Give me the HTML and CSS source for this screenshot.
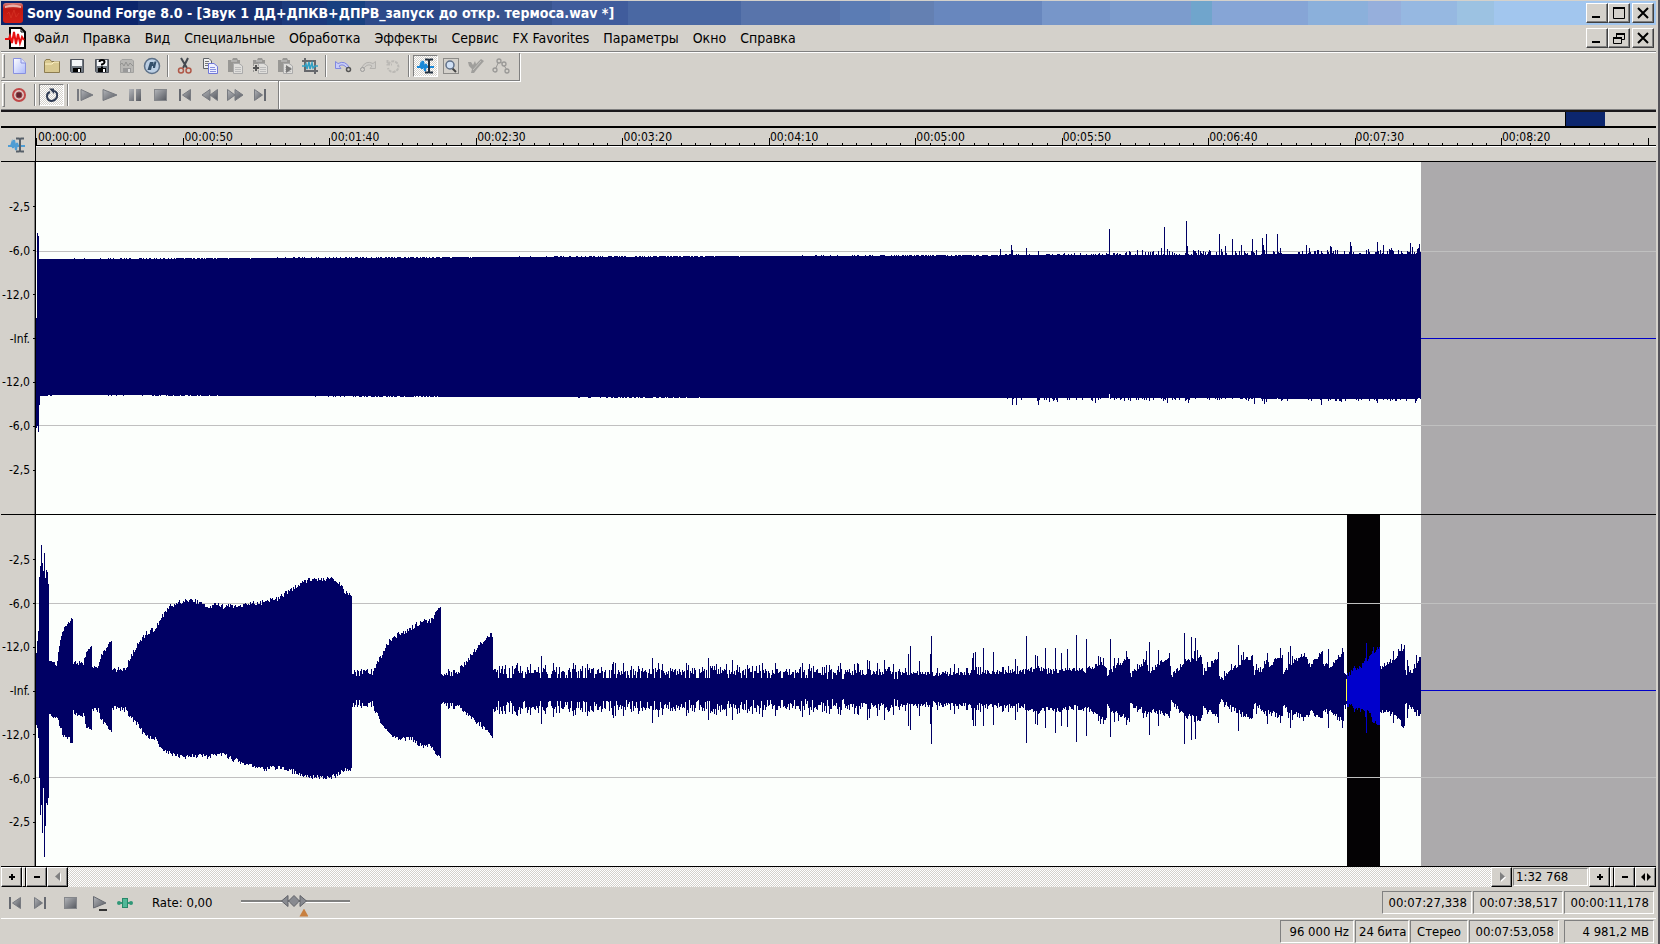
FILE: index.html
```html
<!DOCTYPE html>
<html lang="ru">
<head>
<meta charset="utf-8">
<title>Sony Sound Forge 8.0</title>
<link rel="stylesheet" href="styles.css">
</head>
<body>
<svg class="defs" aria-hidden="true">
  <defs>
    <linearGradient id="steel" x1="0" y1="0" x2="1" y2="1"><stop offset="0" stop-color="#b4b6ba"/><stop offset="1" stop-color="#55585f"/></linearGradient>
    <linearGradient id="paper" x1="0" y1="0" x2="1" y2="1"><stop offset="0" stop-color="#fff"/><stop offset="1" stop-color="#aab8fa"/></linearGradient>
    <linearGradient id="ruby" x1="0" y1="0" x2="0" y2="1"><stop offset="0" stop-color="#d88078"/><stop offset=".3" stop-color="#c01810"/><stop offset="1" stop-color="#d02018"/></linearGradient>
  </defs>
  <symbol id="i-app" viewBox="0 0 20 20"><rect width="20" height="20" rx="3" fill="url(#ruby)"/><path d="M2 3Q10 0 18 3V5Q10 3 2 5Z" fill="#eab0a8"/><path d="M4 11l2-2 2 6 3-8 2 7 3-4" fill="none" stroke="#d83828" stroke-opacity=".6"/></symbol>
  <symbol id="i-doc" viewBox="0 0 22 22"><path d="M5 1H16L20 5V21H5Z" fill="#fff" stroke="#000" stroke-width="2"/><path d="M16 1V5H20" fill="none" stroke="#000"/><path d="M0 12H4L5 9 7 16 9 5 11 17 13 7 15 16 17 10 19 13" fill="none" stroke="#e81010" stroke-width="2"/></symbol>
  <symbol id="i-new" viewBox="0 0 20 20"><path d="M4.500 2.500H12L16.500 7V17.500H4.500Z" fill="url(#paper)" stroke="#8890e0"/><path d="M12 2.500V7H16.500" fill="#dce2ff" stroke="#8890e0"/></symbol>
  <symbol id="i-open" viewBox="0 0 20 20"><path d="M2.500 16.500V5.500L4 3.500H8L9.500 5.500H17.500V16.500Z" fill="#d8c890" stroke="#8c7c50"/><path d="M3 8H10L12 6H17" fill="none" stroke="#fff4c8"/></symbol>
  <symbol id="i-save" viewBox="0 0 20 20"><path d="M3.500 3.500H16.500V16.500H4.500L3.500 15.500Z" fill="#707880" stroke="#50545c"/><rect x="5" y="4" width="10" height="6" fill="#f4f6f8"/><rect x="6" y="12" width="8" height="4" fill="#000"/><rect x="11" y="13" width="2" height="3" fill="#fff"/></symbol>
  <symbol id="i-saveas" viewBox="0 0 20 20"><use href="#i-save"/><path d="M7.500 6Q7.500 4 10 4T12.500 6.200Q12.500 7.500 10 8.500V9.500M10 10.500V12" fill="none" stroke="#000" stroke-width="2"/></symbol>
  <symbol id="i-saveoff" viewBox="0 0 20 20"><path d="M3.500 5L5 3.500H15L16.500 5V16.500H3.500Z" fill="#b8b7b4" stroke="#a2a2a0"/><path d="M3 9l2-2 2 3 2-4 2 4 2-3 3 3" fill="none" stroke="#929290"/><rect x="6" y="12" width="8" height="4" fill="#999"/><rect x="11" y="13" width="2" height="3" fill="#ddd"/></symbol>
  <symbol id="i-publish" viewBox="0 0 20 20"><circle cx="10" cy="10" r="7.500" fill="#bccfe4" stroke="#5c7088" stroke-width="1.500"/><path d="M5.500 14L8 6H11.500V10H10L9 14ZM11 12V10.500L12.500 5.500H14.500L13 12Z" fill="#34506c"/></symbol>
  <symbol id="i-cut" viewBox="0 0 20 20"><path d="M6 2L12 12M13 2L8 12" stroke="#444950" stroke-width="2"/><circle cx="6" cy="14.500" r="2.500" fill="none" stroke="#b05848" stroke-width="1.500"/><circle cx="13.500" cy="14.500" r="2.500" fill="none" stroke="#b05848" stroke-width="1.500"/></symbol>
  <symbol id="i-copy" viewBox="0 0 20 20"><path d="M3.500 2.500H9L11.500 5V12.500H3.500Z" fill="#f0f0f0" stroke="#606468"/><path d="M5 5.500H9M5 7.500H9M5 9.500H9" stroke="#777"/><path d="M8.500 7.500H14L17.500 10.500V17.500H8.500Z" fill="#eef0ff" stroke="#7078d8"/><path d="M10 11.500H15M10 13.500H16M10 15.500H16" stroke="#8890e0"/></symbol>
  <symbol id="i-paste" viewBox="0 0 20 20"><path d="M3 4H7L8 2H12L13 4H15V16H3Z" fill="#989794"/><path d="M6 5H12" stroke="#ccc"/><path d="M8.500 7.500H14L17.500 10V17.500H8.500Z" fill="#dfdedb" stroke="#aaa"/><path d="M10 11.500H16M10 13.500H16M10 15.500H16" stroke="#bbb"/></symbol>
  <symbol id="i-pastemix" viewBox="0 0 20 20"><use href="#i-paste"/><path d="M2 12H10M6 8V16" stroke="#d4d1cb" stroke-width="4"/><path d="M3 12H9M6 9V15" stroke="#555" stroke-width="2"/></symbol>
  <symbol id="i-pasteplay" viewBox="0 0 20 20"><use href="#i-paste"/><path d="M11 9L17 13 11 17Z" fill="#777"/></symbol>
  <symbol id="i-crop" viewBox="0 0 20 20"><path d="M5 2V15H18M2 5H15V18" fill="none" stroke="#66686c" stroke-width="2"/><path d="M2 10H5L6 8 7 13 9 6 10 13 12 7 13 12 15 10H18" fill="none" stroke="#30a0c4" stroke-width="1.500"/></symbol>
  <symbol id="i-undo" viewBox="0 0 20 20"><path d="M2.500 5.500V12.500H8L6 10Q10 7 14 12L16 11Q12 4 5 7.500Z" fill="#c8ccf8" stroke="#8088e0"/><circle cx="15.500" cy="13.500" r="2" fill="#d4d1cb" stroke="#555" stroke-width="1.500"/></symbol>
  <symbol id="i-redo" viewBox="0 0 20 20"><path d="M17.500 5.500V12.500H12L14 10Q10 7 6 12L4 11Q8 4 15 7.500Z" fill="#ceccc8" stroke="#b4b2ae"/><circle cx="4.500" cy="13.500" r="2" fill="#d4d1cb" stroke="#999"/></symbol>
  <symbol id="i-repeat" viewBox="0 0 20 20"><path d="M4.500 4V8.500H9M5 8Q10 3 14 7Q18 13 11 16Q6 16 5 12" fill="none" stroke="#bbb9b5" stroke-width="2" stroke-dasharray="3 1"/></symbol>
  <symbol id="i-edit" viewBox="0 0 20 20"><path d="M1 11H4L5 8 6 13 7 5 9 15 10 8 11 11H18" fill="none" stroke="#1888d8" stroke-width="2"/><path d="M9 3.500H12L13 4.500 14 3.500H17M13 4V16M9 16.500H12L13 15.500 14 16.500H17" fill="none" stroke="#223040" stroke-width="2"/></symbol>
  <symbol id="i-magnify" viewBox="0 0 20 20"><rect x="2.500" y="2.500" width="15" height="15" fill="none" stroke="#444" stroke-dasharray="1 1"/><path d="M11 12L15 16" stroke="#444" stroke-width="2"/><circle cx="9" cy="9" r="4" fill="#d0e0f4" stroke="#607088" stroke-width="1.500"/></symbol>
  <symbol id="i-pencil" viewBox="0 0 20 20"><path d="M2 6H5L7 9 9 5 10 8 15 3 18 5 11 13 8 17H5L6 13 3 10Z" fill="#a09f9c"/><path d="M7 14L15 5" stroke="#c4c2be"/></symbol>
  <symbol id="i-envelope" viewBox="0 0 20 20"><path d="M4 14L8 5 12 8 16 14" fill="none" stroke="#999896"/><g fill="#d4d1cb" stroke="#999896" stroke-width="1.300"><circle cx="4" cy="14" r="2"/><circle cx="8" cy="5" r="2"/><circle cx="13" cy="8" r="2"/><circle cx="16" cy="15" r="2"/></g></symbol>
  <symbol id="i-record" viewBox="0 0 20 20"><circle cx="10" cy="10" r="6" fill="#dcc4c0" stroke="#c04848" stroke-width="2"/><circle cx="10" cy="10" r="3" fill="#602830" stroke="#984048"/></symbol>
  <symbol id="i-loop" viewBox="0 0 20 20"><path d="M12 6Q16 7 15 12Q13 16 9 16Q5 15 5 11Q5 8 8 7" fill="none" stroke="#303c54" stroke-width="2"/><path d="M7 3.500H12V9Z" fill="#303c54"/></symbol>
  <symbol id="i-playall" viewBox="0 0 20 20"><path d="M3 4V16" stroke="#777a80" stroke-width="2"/><path d="M6 4.500L18 10 6 15.500Z" fill="url(#steel)" stroke="#777a80"/></symbol>
  <symbol id="i-play" viewBox="0 0 20 20"><path d="M3 4.500L17 10 3 15.500Z" fill="url(#steel)" stroke="#777a80"/></symbol>
  <symbol id="i-pause" viewBox="0 0 20 20"><path d="M4 4H9V16H4ZM11 4H16V16H11Z" fill="url(#steel)"/></symbol>
  <symbol id="i-stop" viewBox="0 0 20 20"><rect x="4.500" y="4.500" width="12" height="11" fill="url(#steel)" stroke="#85878b"/></symbol>
  <symbol id="i-start" viewBox="0 0 20 20"><path d="M5 4V16" stroke="#666970" stroke-width="2"/><path d="M15.500 4.500V15.500L7.500 10Z" fill="url(#steel)" stroke="#777a80"/></symbol>
  <symbol id="i-end" viewBox="0 0 20 20"><path d="M15 4V16" stroke="#666970" stroke-width="2"/><path d="M4.500 4.500V15.500L12.500 10Z" fill="url(#steel)" stroke="#777a80"/></symbol>
  <symbol id="i-rew" viewBox="0 0 20 20"><path d="M10 4.500V15.500L2 10ZM17.500 4.500V15.500L10 10Z" fill="url(#steel)" stroke="#777a80"/></symbol>
  <symbol id="i-fwd" viewBox="0 0 20 20"><path d="M10 4.500V15.500L18 10ZM2.500 4.500V15.500L10 10Z" fill="url(#steel)" stroke="#777a80"/></symbol>
  <symbol id="i-playplug" viewBox="0 0 20 20"><path d="M3.500 3.500L16 10 3.500 15Z" fill="url(#steel)" stroke="#666970"/><path d="M9 17H17" stroke="#333" stroke-width="2"/></symbol>
  <symbol id="i-scrub" viewBox="0 0 20 20"><path d="M4 10H16" stroke="#309878" stroke-width="2"/><rect x="7.500" y="5.500" width="5" height="9" fill="#50b898" stroke="#288868"/><circle cx="4" cy="10" r="2" fill="#309878"/><circle cx="16" cy="10" r="2" fill="#309878"/></symbol>
  <symbol id="i-min" viewBox="0 0 16 16"><path d="M3 12H11" stroke="#000" stroke-width="2"/></symbol>
  <symbol id="i-max" viewBox="0 0 16 16"><path d="M2.500 3V13.500H13.500V3" fill="none" stroke="#000"/><path d="M2 3H14" stroke="#000" stroke-width="2"/></symbol>
  <symbol id="i-restore" viewBox="0 0 16 16"><path d="M5.500 7V4.500H13.500V9.500H11" fill="none" stroke="#000"/><path d="M5 4H14M2 8H11" stroke="#000" stroke-width="2"/><path d="M2.500 8V13.500H10.500V8" fill="none" stroke="#000"/></symbol>
  <symbol id="i-close" viewBox="0 0 16 16"><path d="M3 3L13 13M13 3L3 13" stroke="#000" stroke-width="2"/></symbol>
  <symbol id="i-plus" viewBox="0 0 16 16"><path d="M5 8H11M8 5V11" stroke="#000" stroke-width="2"/></symbol>
  <symbol id="i-minus" viewBox="0 0 16 16"><path d="M5 8H11" stroke="#000" stroke-width="2"/></symbol>
  <symbol id="i-left" viewBox="0 0 16 16"><path d="M11 4V13L6 8.500Z" fill="#fff"/><path d="M10 3V12L5 7.500Z" fill="#808080"/></symbol>
  <symbol id="i-right" viewBox="0 0 16 16"><path d="M7 4V13L12 8.500Z" fill="#fff"/><path d="M6 3V12L11 7.500Z" fill="#808080"/></symbol>
  <symbol id="i-both" viewBox="0 0 16 16"><path d="M7 4V12L3 8ZM9 4V12L13 8Z" fill="#000"/></symbol>
</svg>

<div class="window">
  <header class="titlebar">
    <svg class="app-icon"><use href="#i-app"/></svg>
    <h1 class="title">Sony Sound Forge 8.0 - [Звук 1 ДД+ДПКВ+ДПРВ_запуск до откр. термоса.wav *]</h1>
    <div class="caption-buttons">
      <button class="cap" aria-label="Свернуть"><svg><use href="#i-min"/></svg></button>
      <button class="cap" aria-label="Развернуть"><svg><use href="#i-max"/></svg></button>
      <button class="cap cap-close" aria-label="Закрыть"><svg><use href="#i-close"/></svg></button>
    </div>
  </header>

  <nav class="menubar">
    <svg class="doc-icon"><use href="#i-doc"/></svg>
    <button>Файл</button><button>Правка</button><button>Вид</button><button>Специальные</button><button>Обработка</button><button>Эффекты</button><button>Сервис</button><button>FX Favorites</button><button>Параметры</button><button>Окно</button><button>Справка</button>
    <div class="caption-buttons">
      <button class="cap" aria-label="Свернуть документ"><svg><use href="#i-min"/></svg></button>
      <button class="cap" aria-label="Восстановить документ"><svg><use href="#i-restore"/></svg></button>
      <button class="cap cap-close" aria-label="Закрыть документ"><svg><use href="#i-close"/></svg></button>
    </div>
  </nav>

  <div class="toolbars">
    <div class="toolbar" role="toolbar" aria-label="Стандартная">
      <span class="grip"></span>
      <button class="tool" aria-label="Новый"><svg><use href="#i-new"/></svg></button>
      <span class="sep"></span>
      <button class="tool" aria-label="Открыть"><svg><use href="#i-open"/></svg></button>
      <button class="tool" aria-label="Сохранить"><svg><use href="#i-save"/></svg></button>
      <button class="tool" aria-label="Сохранить как"><svg><use href="#i-saveas"/></svg></button>
      <button class="tool" aria-label="Сохранить всё"><svg><use href="#i-saveoff"/></svg></button>
      <button class="tool" aria-label="Публикация"><svg><use href="#i-publish"/></svg></button>
      <span class="sep"></span>
      <button class="tool" aria-label="Вырезать"><svg><use href="#i-cut"/></svg></button>
      <button class="tool" aria-label="Копировать"><svg><use href="#i-copy"/></svg></button>
      <button class="tool" aria-label="Вставить"><svg><use href="#i-paste"/></svg></button>
      <button class="tool" aria-label="Смешать"><svg><use href="#i-pastemix"/></svg></button>
      <button class="tool" aria-label="Прослушать буфер"><svg><use href="#i-pasteplay"/></svg></button>
      <button class="tool" aria-label="Обрезать"><svg><use href="#i-crop"/></svg></button>
      <span class="sep"></span>
      <button class="tool" aria-label="Отменить"><svg><use href="#i-undo"/></svg></button>
      <button class="tool" aria-label="Вернуть"><svg><use href="#i-redo"/></svg></button>
      <button class="tool" aria-label="Повторить"><svg><use href="#i-repeat"/></svg></button>
      <span class="sep"></span>
      <button class="tool pressed" aria-label="Правка" aria-pressed="true"><svg><use href="#i-edit"/></svg></button>
      <button class="tool" aria-label="Масштаб"><svg><use href="#i-magnify"/></svg></button>
      <button class="tool" aria-label="Карандаш"><svg><use href="#i-pencil"/></svg></button>
      <button class="tool" aria-label="Огибающая"><svg><use href="#i-envelope"/></svg></button>
    </div>
    <div class="toolbar" role="toolbar" aria-label="Транспорт">
      <span class="grip"></span>
      <button class="tool" aria-label="Запись"><svg><use href="#i-record"/></svg></button>
      <span class="sep"></span>
      <button class="tool pressed" aria-label="Цикл" aria-pressed="true"><svg><use href="#i-loop"/></svg></button>
      <span class="sep"></span>
      <button class="tool" aria-label="Играть всё"><svg><use href="#i-playall"/></svg></button>
      <button class="tool" aria-label="Играть"><svg><use href="#i-play"/></svg></button>
      <button class="tool" aria-label="Пауза"><svg><use href="#i-pause"/></svg></button>
      <button class="tool" aria-label="Стоп"><svg><use href="#i-stop"/></svg></button>
      <button class="tool" aria-label="В начало"><svg><use href="#i-start"/></svg></button>
      <button class="tool" aria-label="Назад"><svg><use href="#i-rew"/></svg></button>
      <button class="tool" aria-label="Вперёд"><svg><use href="#i-fwd"/></svg></button>
      <button class="tool" aria-label="В конец"><svg><use href="#i-end"/></svg></button>
    </div>
  </div>

  <div class="overview"><span class="overview-lead"></span><span class="overview-selection"></span></div>

  <main class="editor">
    <div class="corner"><svg><use href="#i-edit"/></svg></div>
    <div class="ruler">
      <div class="ruler-scale">
        <div class="ruler-labels"><span>00:00:00</span><span>00:00:50</span><span>00:01:40</span><span>00:02:30</span><span>00:03:20</span><span>00:04:10</span><span>00:05:00</span><span>00:05:50</span><span>00:06:40</span><span>00:07:30</span><span>00:08:20</span></div>
        <svg class="ruler-ticks" viewBox="0 0 1620 7" preserveAspectRatio="none"><path id="ticks"/></svg>
      </div>
    </div>
    <div class="level"><span>-2,5</span><span>-6,0</span><span>-12,0</span><span>-Inf.</span><span>-12,0</span><span>-6,0</span><span>-2,5</span></div>
    <div class="channel">
      <svg class="wave" viewBox="36 -176 1620 352" preserveAspectRatio="none">
        <rect class="beyond" x="1421" y="-176" width="235" height="352"/>
        <path class="guide" d="M36-87H1656V-86H36ZM36 87H1656V88H36Z"/>
        <rect class="silence" x="1421" y="0" width="235" height="1"/>
        <path class="signal" id="left"/>
      </svg>
    </div>
    <div class="level"><span>-2,5</span><span>-6,0</span><span>-12,0</span><span>-Inf.</span><span>-12,0</span><span>-6,0</span><span>-2,5</span></div>
    <div class="channel">
      <svg class="wave" viewBox="36 -175 1620 351" preserveAspectRatio="none">
        <rect class="beyond" x="1421" y="-175" width="235" height="351"/>
        <rect class="selection" x="1347" y="-175" width="33" height="351"/>
        <path class="guide" d="M36-87H1656V-86H36ZM36 87H1656V88H36Z"/>
        <rect class="silence" x="1421" y="0" width="235" height="1"/>
        <path class="signal" id="right"/>
        <path class="signal-selected" id="selected"/>
        <rect class="cursor" x="1346" y="-11" width="1" height="22"/>
      </svg>
    </div>
  </main>

  <div class="scrollrow">
    <button class="flat" aria-label="Увеличить уровень"><svg><use href="#i-plus"/></svg></button>
    <span class="splitter"></span>
    <button class="flat" aria-label="Уменьшить уровень"><svg><use href="#i-minus"/></svg></button>
    <button class="flat" aria-label="Влево"><svg><use href="#i-left"/></svg></button>
    <div class="track"></div>
    <button class="flat" aria-label="Вправо"><svg><use href="#i-right"/></svg></button>
    <output class="ratio">1:32 768</output>
    <button class="flat" aria-label="Приблизить"><svg><use href="#i-plus"/></svg></button>
    <span class="splitter"></span>
    <button class="flat" aria-label="Отдалить"><svg><use href="#i-minus"/></svg></button>
    <button class="flat" aria-label="Показать всё"><svg><use href="#i-both"/></svg></button>
  </div>

  <div class="transport">
    <button class="tool" aria-label="В начало"><svg><use href="#i-start"/></svg></button>
    <button class="tool" aria-label="В конец"><svg><use href="#i-end"/></svg></button>
    <button class="tool spaced" aria-label="Стоп"><svg><use href="#i-stop"/></svg></button>
    <button class="tool spaced" aria-label="Играть через эффект"><svg><use href="#i-playplug"/></svg></button>
    <button class="tool" aria-label="Прокрутка"><svg><use href="#i-scrub"/></svg></button>
    <label class="rate-label" for="rate">Rate: 0,00</label>
    <div class="rate"><input id="rate" type="range" min="0" max="100" value="48"><span class="rate-mark"></span></div>
    <div class="cells">
      <span class="cell time">00:07:27,338</span><span class="cell time">00:07:38,517</span><span class="cell time">00:00:11,178</span>
    </div>
  </div>

  <footer class="status">
    <span class="cell freq">96 000 Hz</span><span class="cell bits">24 бита</span><span class="cell mode">Стерео</span><span class="cell time">00:07:53,058</span><span class="cell time disk">4 981,2 MB</span>
  </footer>
</div>
<script src="wave.js"></script>
</body>
</html>
```
FILE: styles.css
```css
* { box-sizing: border-box; }
body {
  margin: 0;
  background: #d4d1cb;
  color: #000;
  font: 13px/16px "DejaVu Sans Condensed", "DejaVu Sans", "Noto Sans", sans-serif;
}
button { margin: 0; padding: 0; border: 0; background: none; font: inherit; color: inherit; }
svg { display: block; }
.defs { position: absolute; width: 0; height: 0; }

.window {
  display: flex;
  flex-direction: column;
  height: 100vh;
  padding: 1px 2px 0 1px;
  border-right: 2px solid #55535a;
}

/* title and menu */
.titlebar {
  display: flex;
  align-items: center;
  flex: 0 0 24px;
  padding: 0 2px 0 2px;
  background: linear-gradient(90deg,
    #0c256b 8.300%, #183171 8.300% 17%, #1c3a7c 17% 19.700%, #184180 19.700% 22%,
    #2c4a8a 22% 26.500%, #38548f 26.500% 33.300%, #405c9c 33.300% 37.900%, #4a68a3 37.900% 44.700%,
    #5874ab 44.700% 50.700%, #5b7cb4 50.700% 53.700%, #6480b2 53.700% 56.400%, #6887be 56.400% 62.900%,
    #7796c9 62.900% 67%, #7c9ccd 67% 71.900%, #70a5cc 71.900% 73.200%, #86a5d6 73.200% 79%,
    #8bb0db 79% 82.600%, #96afdc 82.600% 84.600%, #96b8e1 84.600% 88%, #9cc2e2 88% 90.200%, #a2c6ee 90.200%);
}
.app-icon { width: 20px; height: 20px; }
.title { flex: 1; margin: 0 0 0 4px; color: #fff; font-size: 14px; line-height: 20px; white-space: nowrap; }
.caption-buttons { display: flex; margin-left: auto; }
.cap {
  display: grid;
  place-items: center;
  width: 22px;
  height: 20px;
  background: #d4d1cb;
  border: 1px solid;
  border-color: #fff #404040 #404040 #fff;
  box-shadow: inset -1px -1px #808080;
}
.cap svg { width: 16px; height: 16px; }
.cap-close { margin-left: 2px; }
.menubar {
  display: flex;
  align-items: center;
  flex: 0 0 27px;
  padding: 0 2px 1px 4px;
  border-bottom: 1px solid #808080;
  gap: 14px;
}
.menubar > button { font-size: 14px; white-space: nowrap; }
.doc-icon { width: 22px; height: 22px; margin-right: -7px; }

/* toolbars */
.toolbars { border-top: 1px solid #fff; border-bottom: 1px solid #808080; }
.toolbar {
  display: flex;
  align-items: center;
  width: max-content;
  height: 28px;
  padding: 0 6px 1px 0;
  border-right: 1px solid #808080;
  border-bottom: 1px solid #808080;
  box-shadow: 1px 1px #fff;
}
.toolbar + .toolbar { padding-bottom: 0; border-bottom: 0; box-shadow: 1px 0 #fff; }
.grip { width: 3px; height: 24px; margin: 0 1px; border: 1px solid; border-color: #fff #808080 #808080 #fff; }
.sep { width: 2px; height: 22px; margin: 0 3px; border-left: 1px solid #808080; border-right: 1px solid #fff; }
.tool { display: grid; place-items: center; width: 25px; height: 22px; }
.tool svg { width: 20px; height: 20px; }
.pressed {
  border: 1px solid;
  border-color: #808080 #fff #fff #808080;
  background: repeating-conic-gradient(#fff 0 25%, #d4d1cb 0 50%) 0 0 / 2px 2px;
}

/* overview strip */
.overview {
  display: flex;
  flex: 0 0 18px;
  border-top: 2px solid #1a181c;
  border-bottom: 2px solid #000;
}
.overview-lead { flex: 1565; }
.overview-selection { flex: 39; background: #0c266e; border-left: 1px solid #000; }
.overview::after { content: ""; flex: 51; }

/* editor */
.editor {
  display: grid;
  grid-template-columns: 35px 1fr;
  grid-template-rows: 34px minmax(0, 353fr) minmax(0, 352fr);
  flex: 1;
  min-height: 0;
}
.corner { display: grid; place-items: center; padding-right: 2px; border-right: 1px solid #000; border-bottom: 1px solid #000; }
.corner svg { width: 20px; height: 20px; opacity: .7; }
.ruler { border-bottom: 1px solid #000; }
.ruler-scale { display: grid; height: 18px; border-bottom: 1px solid #000; box-shadow: 0 1px #fff; }
.ruler-labels, .ruler-ticks { grid-area: 1 / 1; min-width: 0; }
.ruler-labels { display: flex; overflow: hidden; font-size: 12px; line-height: 18px; }
.ruler-labels span { flex: 0 0 9.037%; padding-left: 2px; }
.ruler-ticks { align-self: end; width: 100%; height: 7px; shape-rendering: crispEdges; }
.level {
  display: flex;
  flex-direction: column;
  padding-top: 1px;
  border-right: 1px solid #000;
  border-bottom: 1px solid #000;
  box-shadow: inset -1px 0 #808080;
  font-size: 12px;
}
.level::before, .level::after { content: ""; flex: .5; }
.level span { display: flex; align-items: center; justify-content: flex-end; flex: 1; gap: 3px; }
.level span::after { content: ""; width: 2px; height: 1px; background: #000; }
.channel { min-height: 0; overflow: hidden; background: #fcfffc; border-bottom: 1px solid #000; }
.wave { width: 100%; height: 100%; shape-rendering: crispEdges; }
.beyond { fill: #acaaac; }
.guide { fill: #c0c0c0; }
.silence { fill: #0000c8; }
.signal { fill: #000064; }
.signal-selected { fill: #0000cc; }
.selection { fill: #040204; }
.cursor { fill: #ffff40; }

/* scroll row */
.scrollrow { display: flex; flex: 0 0 20px; }
.flat {
  display: grid;
  place-items: center;
  width: 21px;
  border: 1px solid;
  border-color: #fff #000 #000 #fff;
  box-shadow: inset -1px -1px #808080;
}
.flat svg { width: 16px; height: 16px; }
.splitter { width: 4px; border: 1px solid; border-color: #fff #000 #000 #fff; }
.track { flex: 1; background: repeating-conic-gradient(#fff 0 25%, #d4d1cb 0 50%) 0 0 / 2px 2px; }
.ratio { width: 75px; margin: 1px; padding-left: 2px; border: 1px solid; border-color: #808080 #fff #fff #808080; line-height: 16px; }

/* transport */
.transport { display: flex; align-items: center; flex: 0 0 32px; padding: 0 2px 0 1px; border-bottom: 1px solid #fff; }
.spaced { margin-left: 5px; }
.rate-label { margin-left: 15px; }
.rate { position: relative; width: 109px; height: 28px; margin-left: 29px; }
.rate input { appearance: none; display: block; width: 100%; height: 26px; margin: 0; background: none; }
.rate input::-webkit-slider-runnable-track { height: 3px; background: linear-gradient(#808080 2px, #fff 2px); }
.rate input::-webkit-slider-thumb {
  appearance: none;
  width: 26px;
  height: 12px;
  margin-top: -5px;
  background: url("data:image/svg+xml,%3Csvg xmlns='http://www.w3.org/2000/svg' viewBox='0 0 26 12'%3E%3Cpath d='M7 .5V11.500L.5 6ZM19 .5V11.500L25.500 6ZM13 .5L18.500 6 13 11.500 7.500 6Z' fill='%23888a90' stroke='%23606268'/%3E%3C/svg%3E");
}
.rate-mark {
  position: absolute;
  left: 58px;
  bottom: 0;
  width: 9px;
  height: 8px;
  background: #c88040;
  clip-path: polygon(50% 0, 100% 100%, 0 100%);
}

/* sunken cells */
.cells { display: flex; gap: 1px; margin-left: auto; }
.cell {
  height: 23px;
  padding: 0 4px;
  border: 1px solid;
  border-color: #808080 #fff #fff #808080;
  line-height: 21px;
  text-align: right;
  white-space: nowrap;
}
.time { width: 90px; }
.status { display: flex; justify-content: flex-end; flex: 0 0 25px; gap: 1px; padding: 1px 2px 0; }
.freq { width: 74px; }
.bits { width: 54px; padding: 0 3px; }
.mode { width: 58px; text-align: center; }
.disk { margin-left: 4px; }
```
FILE: wave.js
```javascript
const START = 36, END = 1421, SEL_START = 1347, SEL_END = 1380;

// Breakpoints: x, peak above centre, peak below centre
const rightEnvelope = [
  [36,37,35],[37,49,38],[38,59,48],[39,113,88],[40,124,125],[41,145,115],[42,127,143],[43,119,98],
  [44,137,167],[45,112,136],[46,120,113],[47,118,115],[48,106,108],[49,28,24],[56,25,26],[57,30,27],
  [59,45,34],[62,55,43],[65,63,48],[69,67,49],[72,71,55],[73,27,21],[80,27,27],[83,27,24],[86,38,35],
  [91,45,37],[92,20,18],[98,24,20],[101,35,29],[106,43,36],[111,48,40],[112,20,17],[125,20,19],
  [130,32,26],[138,46,35],[146,56,47],[155,61,47],[160,71,58],[170,84,62],[180,88,67],[190,89,65],
  [203,87,65],[206,80,67],[213,85,64],[224,83,65],[240,84,72],[260,87,78],[280,92,77],[290,100,80],
  [300,105,84],[308,110,86],[318,110,87],[330,111,86],[335,110,85],[345,98,80],[351,95,80],[352,17,14],
  [372,18,14],[380,32,30],[390,50,44],[400,56,48],[410,60,48],[420,68,54],[430,68,56],[438,82,64],
  [440,84,66],[441,17,15],[455,17,16],[465,26,22],[473,37,30],[480,46,34],[490,56,43],[492,55,46],
  [493,17,17],[700,17,16],[950,16,14],[1024,18,16],[1026,20,20],[1060,19,20],[1070,20,17],[1086,20,18],
  [1100,27,29],[1106,24,28],[1107,12,12],[1109,18,20],[1129,33,30],[1130,14,14],[1146,29,22],[1149,18,20],
  [1169,34,25],[1171,14,13],[1183,28,25],[1201,33,29],[1203,18,18],[1218,34,28],[1219,12,12],[1225,12,12],
  [1228,20,16],[1252,34,28],[1254,17,15],[1282,34,28],[1283,19,17],[1303,36,28],[1310,24,22],[1322,38,30],
  [1323,25,20],[1330,24,22],[1343,39,32],[1344,19,16],[1346,18,16],[1347,14,14],[1355,22,20],[1367,28,20],
  [1372,37,30],[1379,41,36],[1380,22,20],[1396,34,26],[1399,41,30],[1404,42,37],[1405,17,14],[1410,17,17],
  [1419,31,24],[1421,31,24]
];
const rightSpikes = {
  541:[34,34],652:[32,33],708:[32,30],732:[30,30],762:[27,27],867:[30,30],869:[29,28],884:[30,30],
  908:[36,36],910:[44,40],919:[29,26],930:[36,34],931:[54,54],954:[26,24],972:[32,30],973:[37,36],
  975:[38,36],983:[42,36],993:[38,35],1015:[31,30],1026:[54,53],1035:[35,34],1037:[34,35],1045:[42,38],
  1055:[42,43],1061:[37,36],1067:[41,37],1076:[55,52],1086:[51,46],1110:[51,47],1114:[32,32],
  1118:[32,31],1146:[39,27],1149:[48,45],1158:[40,36],1184:[57,54],1191:[53,50],1195:[52,49],
  1238:[45,41],1243:[38,27],1267:[37,34],1288:[38,28],1290:[44,38],1328:[41,38],1366:[47,43],
  1373:[43,33],1407:[30,28]
};
const leftEnvelope = [
  [36,20,90],[37,105,88],[38,102,94],[39,79,67],[40,79,58],[60,79,57],[260,80,58],[500,81,59],
  [760,82,60],[1100,83,60],[1421,84,61]
];
const leftSpikes = {
  1000:[89,60],1011:[93,60],1012:[88,67],1016:[84,67],1026:[90,60],1038:[87,67],1049:[84,64],
  1057:[84,64],1095:[84,65],1109:[109,56],1137:[88,60],1142:[88,61],1161:[90,61],1164:[111,61],
  1167:[89,65],1186:[117,62],1187:[92,61],1188:[84,65],1219:[104,62],1221:[89,61],1225:[92,61],
  1232:[99,61],1241:[93,61],1252:[99,61],1254:[85,66],1262:[100,63],1263:[93,61],1264:[88,66],
  1266:[104,64],1277:[104,60],1280:[90,61],1306:[93,61],1309:[90,61],1321:[87,67],1330:[92,62],
  1331:[91,61],1337:[88,61],1350:[96,61],1351:[92,61],1377:[96,65],1383:[93,62],1391:[90,61],
  1410:[95,61],1412:[91,61],1415:[84,65],1418:[90,60],1419:[94,60]
};

let seed = 20;
function random() {
  seed = (seed * 16807) % 2147483647;
  return seed / 2147483647;
}

function sample(points, x) {
  let i = 1;
  while (i < points.length - 1 && points[i][0] <= x) i++;
  const a = points[i - 1], b = points[i];
  const t = Math.max(0, Math.min(1, (x - a[0]) / (b[0] - a[0])));
  return [a[1] + (b[1] - a[1]) * t, a[2] + (b[2] - a[2]) * t];
}

function column(x, up, down) {
  return `M${x} ${-Math.round(up)}h1V${Math.round(down)}h-1Z`;
}

function rightNoise(x) {
  if (x < 49) return [0, 0];
  if ((x > 352 && x < 374) || (x > 441 && x < 460)) {
    const n = random() * 8 - 4;
    return [n, n];
  }
  if (x < 493) return [random() * 5 - 2, random() * 5 - 2];
  if (x < 900) {
    const r = random();
    const n = r > .85 ? 5 + random() * 6 : r < .15 ? -5 : random() * 7 - 2;
    return [n, n - 1 + random() * 2];
  }
  if (x < 1030) {
    const n = random() > .9 ? 6 : random() * 5 - 2;
    return [n, n - 1 + random() * 2];
  }
  const n = random() > .94 ? 6 : 0;
  return [random() * 6 - 3 + n, random() * 6 - 3 + n];
}

function leftNoise(x) {
  if (x < 40) return [0, 0];
  if (x < 1000) return [random() - 0.5, random() * 0.6 - 0.3];
  const strength = x < 1120 ? 2 : 5;
  return [random() > .6 ? random() * strength : 0, random() > .75 ? random() * 3 : 0];
}

function draw(points, spikes, noise, from, to) {
  let d = "";
  for (let x = from; x < to; x++) {
    let [up, down] = sample(points, x);
    const [nu, nd] = noise(x);
    up += nu;
    down += nd;
    if (spikes[x]) [up, down] = spikes[x];
    d += column(x, up, down);
  }
  return d;
}

document.getElementById("left").setAttribute("d", draw(leftEnvelope, leftSpikes, leftNoise, START, END));
document.getElementById("right").setAttribute("d",
  draw(rightEnvelope, rightSpikes, rightNoise, START, SEL_START) +
  draw(rightEnvelope, rightSpikes, rightNoise, SEL_END, END));
document.getElementById("selected").setAttribute("d",
  draw(rightEnvelope, rightSpikes, rightNoise, SEL_START, SEL_END));

let ticks = "";
for (let i = 0; i <= 110; i++) {
  const x = Math.round(i * 14.65);
  ticks += `M${x} ${i % 10 ? 5 : 0}h1V7h-1Z`;
}
document.getElementById("ticks").setAttribute("d", ticks);
```
